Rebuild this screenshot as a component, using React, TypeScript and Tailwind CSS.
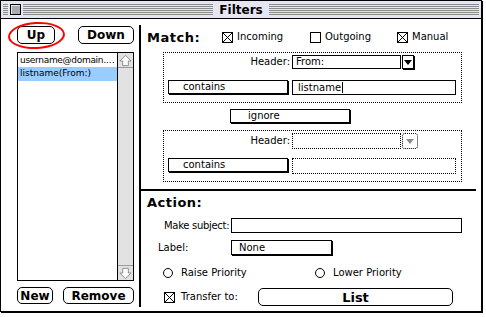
import React from "react";

const sm = "font-['DejaVu_Sans',sans-serif] text-[10px] leading-none text-black";
const bold = "font-['DejaVu_Sans',sans-serif] font-bold text-black leading-none";

function Stripes() {
  return (
    <div className="flex flex-col gap-px">
      <div className="h-px bg-[#8a8a8a]" />
      <div className="h-px bg-[#8a8a8a]" />
      <div className="h-px bg-[#8a8a8a]" />
      <div className="h-px bg-[#8a8a8a]" />
      <div className="h-px bg-[#8a8a8a]" />
      <div className="h-px bg-[#8a8a8a]" />
    </div>
  );
}

function CheckBox({ checked }: { checked: boolean }) {
  return (
    <span className="flex h-[11px] w-[11px] shrink-0 border border-black bg-white">
      {checked && (
        <svg viewBox="0 0 9 9" className="h-[9px] w-[9px]">
          <path d="M0 0L9 9M9 0L0 9" stroke="black" strokeWidth="1" />
        </svg>
      )}
    </span>
  );
}

function Radio() {
  return <span className="h-[10px] w-[10px] shrink-0 rounded-full border border-black bg-white" />;
}

function MacButton({ label, className }: { label: string; className: string }) {
  return (
    <div
      className={`flex items-center justify-center rounded-[5px] border border-black bg-white text-[12px] ${bold} ${className}`}
    >
      {label}
    </div>
  );
}

function ArrowIcon({ down }: { down?: boolean }) {
  return (
    <svg viewBox="0 0 16 16" className={`h-[15px] w-[15px] ${down ? "rotate-180" : ""}`}>
      <path d="M8 2.5L14 8.5H11V13.5H5V8.5H2Z" fill="white" stroke="#8a8a8a" strokeWidth="1" />
    </svg>
  );
}

export default function App() {
  return (
    <div className="relative h-[317px] w-[486px] overflow-hidden bg-white">
      <div className="flex h-[312px] w-[482px] flex-col border border-black bg-white shadow-[1px_1px_0_#000]">
        {/* title bar */}
        <div className="flex h-[18px] items-center border-b border-black bg-[#e6e6f2] px-[2px]">
          <div className="flex flex-1 items-center">
            <div className="w-[5px]">
              <Stripes />
            </div>
            <div className="mx-[2px] h-[11px] w-[11px] border border-black bg-[#a9a9b4] shadow-[inset_1px_1px_0_#e6e6f2]" />
            <div className="flex-1">
              <Stripes />
            </div>
          </div>
          <div className={`px-[6px] text-[12px] ${bold}`}>Filters</div>
          <div className="flex-1">
            <Stripes />
          </div>
        </div>

        {/* body */}
        <div className="flex flex-1">
          {/* left panel */}
          <div className="flex w-[138px] flex-col pl-[16px] pt-[7px]">
            <div className="flex h-[18px] gap-[23px]">
              <MacButton label="Up" className="w-[38px]" />
              <MacButton label="Down" className="w-[56px]" />
            </div>
            <div className="mt-[8px] flex h-[229px] w-[117px] border border-black">
              <div className="flex min-w-0 flex-1 flex-col">
                <div className="h-[14px] truncate pl-[2px] pt-[2px] font-['DejaVu_Sans',sans-serif] text-[9px] leading-[10px] tracking-[-0.3px] text-black">
                  username@domain.c...
                </div>
                <div className="flex h-[14px] items-center whitespace-nowrap bg-[#99ccff] pl-[2px] font-['DejaVu_Sans',sans-serif] text-[9px] text-black">
                  listname(From:)
                </div>
              </div>
              <div className="flex w-[16px] flex-col border-l border-black bg-[#e2e2e2]">
                <div className="flex h-[15px] items-center justify-center border-b border-[#9a9a9a]">
                  <ArrowIcon />
                </div>
                <div className="flex-1" />
                <div className="flex h-[15px] items-center justify-center border-t border-[#9a9a9a]">
                  <ArrowIcon down />
                </div>
              </div>
            </div>
            <div className="mt-[6px] flex h-[17px] gap-[10px]">
              <MacButton label="New" className="w-[36px]" />
              <MacButton label="Remove" className="w-[71px]" />
            </div>
          </div>

          {/* divider */}
          <div className="mb-[4px] mt-[6px] w-[2px] bg-black" />

          {/* right panel */}
          <div className="flex flex-1 flex-col pt-[12px]">
            <div className="flex h-[12px] items-center">
              <div className={`ml-[6px] w-[75px] text-[13px] tracking-[0.5px] ${bold}`}>Match:</div>
              <div className="flex w-[88px] items-center gap-[4px]">
                <CheckBox checked />
                <span className={sm}>Incoming</span>
              </div>
              <div className="flex w-[87px] items-center gap-[4px]">
                <CheckBox checked={false} />
                <span className={sm}>Outgoing</span>
              </div>
              <div className="flex items-center gap-[4px]">
                <CheckBox checked />
                <span className={sm}>Manual</span>
              </div>
            </div>

            {/* criteria box 1 */}
            <div className="ml-[22px] mt-[9px] h-[51px] w-[299px] border border-dotted border-black pt-[2px]">
              <div className="flex h-[14px] items-center">
                <div className={`w-[128px] pr-[2px] text-right ${sm}`}>Header:</div>
                <div className={`flex h-[14px] w-[109px] items-center border border-black pl-[3px] ${sm}`}>From:</div>
                <div className="ml-px flex h-[14px] w-[12px] items-center justify-center border border-black shadow-[1px_1px_0_#000]">
                  <svg viewBox="0 0 8 5" className="h-[5px] w-[8px]">
                    <path d="M0 0H8L4 5Z" fill="black" />
                  </svg>
                </div>
              </div>
              <div className="mt-[11px] flex items-start">
                <div className={`ml-[4px] flex h-[14px] w-[120px] items-center border border-black pl-[14px] shadow-[1px_1px_0_#000] ${sm}`}>
                  contains
                </div>
                <div className={`ml-[4px] flex h-[15px] w-[164px] items-center border border-black pl-[5px] ${sm}`}>
                  listname<span className="ml-px h-[11px] w-px bg-black" />
                </div>
              </div>
            </div>

            <div className={`ml-[89px] mt-[6px] flex h-[14px] w-[120px] items-center border border-black pl-[17px] shadow-[1px_1px_0_#000] ${sm}`}>
              ignore
            </div>

            {/* criteria box 2 (disabled) */}
            <div className="ml-[22px] mt-[7px] h-[52px] w-[299px] border border-dotted border-black pt-[2px]">
              <div className="flex h-[16px] items-center">
                <div className={`w-[128px] pr-[2px] text-right ${sm} text-[#9a9a9a]`}>Header:</div>
                <div className="h-[16px] w-[109px] border border-dotted border-black" />
                <div className="ml-px flex h-[16px] w-[16px] items-center justify-center rounded-[3px] border border-dotted border-black">
                  <svg viewBox="0 0 8 5" className="h-[5px] w-[8px]">
                    <path d="M0 0H8L4 5Z" fill="#8a8a8a" />
                  </svg>
                </div>
              </div>
              <div className="mt-[9px] flex items-start">
                <div className={`ml-[4px] flex h-[14px] w-[120px] items-center border border-black pl-[14px] shadow-[1px_1px_0_#000] ${sm} text-[#9a9a9a]`}>
                  contains
                </div>
                <div className="ml-[4px] h-[16px] w-[164px] border border-dotted border-black" />
              </div>
            </div>

            <div className="mt-[7px] h-[2px] w-[335px] bg-black" />

            <div className={`ml-[6px] mt-[4px] flex h-[14px] items-center text-[13px] tracking-[0.5px] ${bold}`}>Action:</div>

            <div className="mt-[9px] flex h-[15px] items-center">
              <div className={`ml-[23px] w-[67px] whitespace-nowrap tracking-[-0.3px] ${sm}`}>Make subject:</div>
              <div className="h-[15px] w-[231px] border border-black" />
            </div>

            <div className="mt-[7px] flex h-[15px] items-center">
              <div className={`ml-[17px] w-[73px] ${sm}`}>Label:</div>
              <div className={`flex h-[15px] w-[101px] items-center border border-black pl-[7px] shadow-[1px_1px_0_#000] ${sm}`}>
                None
              </div>
            </div>

            <div className="mt-[13px] flex h-[10px] items-center">
              <div className="ml-[22px] flex w-[152px] items-center gap-[8px]">
                <Radio />
                <span className={sm}>Raise Priority</span>
              </div>
              <div className="flex items-center gap-[8px]">
                <Radio />
                <span className={sm}>Lower Priority</span>
              </div>
            </div>

            <div className="mt-[10px] flex h-[18px] items-center">
              <div className="ml-[23px] flex w-[94px] items-center gap-[6px]">
                <CheckBox checked />
                <span className={sm}>Transfer to:</span>
              </div>
              <div className={`flex h-[18px] w-[195px] items-center justify-center rounded-[5px] border border-black text-[13px] ${bold}`}>
                List
              </div>
            </div>
          </div>
        </div>
      </div>

      {/* red annotation ring */}
      <div className="absolute left-[8px] top-[22px] h-[27px] w-[57px] -rotate-3 rounded-[50%] border-[2.5px] border-[#f00]" />
    </div>
  );
}
